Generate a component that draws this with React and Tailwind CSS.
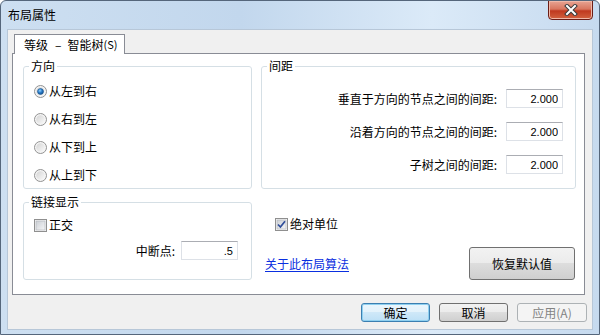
import { useState } from "react";

const cjk = "font-['Noto_Sans_CJK_SC',sans-serif]";

// win7 style radio
function Radio({ checked }) {
  return (
    <svg width="13" height="13" viewBox="0 0 13 13" className="shrink-0">
      <defs>
        <linearGradient id="rbg" x1="0" y1="0" x2="1" y2="1">
          <stop offset="0" stopColor="#d4d4d4" />
          <stop offset="1" stopColor="#fafafa" />
        </linearGradient>
        <radialGradient id="rdot" cx="0.4" cy="0.35" r="0.7">
          <stop offset="0" stopColor="#8fd3ff" />
          <stop offset="0.5" stopColor="#2b7bc8" />
          <stop offset="1" stopColor="#0f4a86" />
        </radialGradient>
      </defs>
      <circle cx="6.5" cy="6.5" r="6" fill="#f4f4f4" stroke="#929292" />
      <circle cx="6.5" cy="6.5" r="4.3" fill="url(#rbg)" />
      {checked && <circle cx="6.5" cy="6.5" r="3" fill="url(#rdot)" stroke="#1c5890" strokeWidth="0.6" />}
    </svg>
  );
}

function Check({ checked }) {
  return (
    <svg width="13" height="13" viewBox="0 0 13 13" className="shrink-0">
      <defs>
        <linearGradient id="cbg" x1="0" y1="0" x2="1" y2="1">
          <stop offset="0" stopColor="#cbcfd5" />
          <stop offset="1" stopColor="#f6f6f6" />
        </linearGradient>
      </defs>
      <rect x="0.5" y="0.5" width="12" height="12" fill="#f4f4f4" stroke="#8f8f8f" />
      <rect x="2" y="2" width="9" height="9" fill="url(#cbg)" stroke="#aeb3b9" strokeWidth="0.6" />
      {checked && (
        <path d="M3 6.5 L5.4 9 L10 3.2" fill="none" stroke="#2f4d9a" strokeWidth="1.7" />
      )}
    </svg>
  );
}

function Field({ value, className = "" }) {
  return (
    <input
      readOnly
      value={value}
      className={
        "h-[19px] w-[57px] border border-[#dde1e7] border-t-[#abadb3] bg-white pr-[4px] text-right text-[11px] text-black outline-none font-['Liberation_Sans',sans-serif] " +
        className
      }
    />
  );
}

function Btn({ children, className = "", disabled, primary }) {
  let look =
    "border-[#707070] bg-[linear-gradient(#f2f2f2,#ebebeb_49%,#dddddd_50%,#cfcfcf)] text-black";
  if (primary)
    look =
      "border-[#3c7fb1] bg-[linear-gradient(#eaf6fd,#e3f2fb_49%,#cfe8f8_50%,#bde0f6)] text-black shadow-[inset_0_0_0_1px_#8fd0f0]";
  if (disabled) look = "border-[#adb2b5] bg-[#f4f4f4] text-[#838383]";
  return (
    <div
      className={
        "flex items-center justify-center rounded-[3px] border text-[12px] leading-none " +
        look +
        " " +
        className
      }
    >
      {children}
    </div>
  );
}

function Group({ title, className = "", children }) {
  return (
    <fieldset className={"rounded-[3px] border border-[#d5dfe5] " + className}>
      <legend className="ml-[5px] px-[2px] text-[12px] leading-[16px]">{title}</legend>
      {children}
    </fieldset>
  );
}

export default function App() {
  const [dir] = useState(0);
  const dirs = ["从左到右", "从右到左", "从下到上", "从上到下"];
  const gaps = ["垂直于方向的节点之间的间距:", "沿着方向的节点之间的间距:", "子树之间的间距:"];

  return (
    <div className={"h-[335px] w-[600px] overflow-hidden rounded-t-[6px] border border-[#55667b] bg-[linear-gradient(90deg,#cddff1,#c2d7ed_40%,#dbeaf8_72%,#c6daef)] text-black " + cjk}>
      {/* title bar */}
      <div className="flex h-[28px] items-start justify-between">
        <div className="pl-[7px] pt-[6px] text-[12px] leading-[16px]">布局属性</div>
        <div className="mr-[6px] mt-[-1px] flex h-[20px] w-[45px] items-center justify-center rounded-b-[4px] border border-[#6b1d16] bg-[linear-gradient(#e8a493,#d9765f_45%,#c0391f_55%,#d2623f)] shadow-[inset_0_0_0_1px_#f0b8a8]">
          <svg width="14" height="12" viewBox="0 0 14 12">
            <path d="M3 2 L11 10 M11 2 L3 10" stroke="#3a3a3a" strokeWidth="4" strokeLinecap="square" />
            <path d="M3 2 L11 10 M11 2 L3 10" stroke="#ffffff" strokeWidth="2" strokeLinecap="square" />
          </svg>
        </div>
      </div>

      {/* client */}
      <div className="ml-[6px] h-[301px] w-[586px] border border-[#b7c7d8] bg-[#f0f0f0]">
        <div className="relative z-10 ml-[6px] mt-[4px] -mb-[1px] flex h-[20px] w-[111px] items-center border border-b-0 border-[#898c95] bg-white pl-[9px] text-[12px] leading-none">
          <span>等级</span>
          <span className="ml-[7px]">–</span>
          <span className="ml-[6px]">智能树</span>
          <span className="text-[11px]">(S)</span>
        </div>
        <div className="ml-[4px] h-[242px] w-[573px] border border-[#898c95] bg-white pl-[10px] pt-[4px]">
          <div className="flex gap-[9px]">
            <Group title="方向" className="h-[131px] w-[229px]">
              <div className="flex flex-col pl-[10px] pt-[3px]">
                {dirs.map((d, i) => (
                  <div key={d} className="flex h-[28px] items-center gap-[2px] text-[12px]">
                    <Radio checked={i === dir} />
                    <span>{d}</span>
                  </div>
                ))}
              </div>
            </Group>
            <Group title="间距" className="h-[131px] w-[315px]">
              <div className="flex flex-col gap-[14px] pr-[12px] pt-[15px]">
                {gaps.map((g) => (
                  <div key={g} className="flex items-center justify-end gap-[9px] text-[12px]">
                    <span>{g}</span>
                    <Field value="2.000" />
                  </div>
                ))}
              </div>
            </Group>
          </div>

          <div className="mt-[5px] flex gap-[9px]">
            <Group title="链接显示" className="h-[86px] w-[229px]">
              <div className="flex h-[16px] items-center gap-[2px] pl-[10px] mt-[7px] text-[12px]">
                <Check />
                <span>正交</span>
              </div>
              <div className="mt-[8px] flex items-center justify-end gap-[6px] pr-[13px] text-[12px]">
                <span>中断点:</span>
                <Field value=".5" />
              </div>
            </Group>
            <div className="flex w-[315px] flex-col">
              <div className="ml-[14px] mt-[22px] flex h-[16px] items-center gap-[2px] text-[12px]">
                <Check checked />
                <span>绝对单位</span>
              </div>
              <div className="mt-[15px] flex items-center justify-between pl-[4px] pr-[1px]">
                <a className="text-[12px] text-[#0a2fe0] underline underline-offset-2">关于此布局算法</a>
                <Btn className="h-[33px] w-[106px]">恢复默认值</Btn>
              </div>
            </div>
          </div>
        </div>

        {/* dialog buttons */}
        <div className="mr-[5px] mt-[8px] flex justify-end gap-[9px]">
          <Btn primary className="h-[19px] w-[69px]">确定</Btn>
          <Btn className="h-[19px] w-[69px]">取消</Btn>
          <Btn disabled className="h-[19px] w-[70px]">应用(A)</Btn>
        </div>
      </div>
    </div>
  );
}
